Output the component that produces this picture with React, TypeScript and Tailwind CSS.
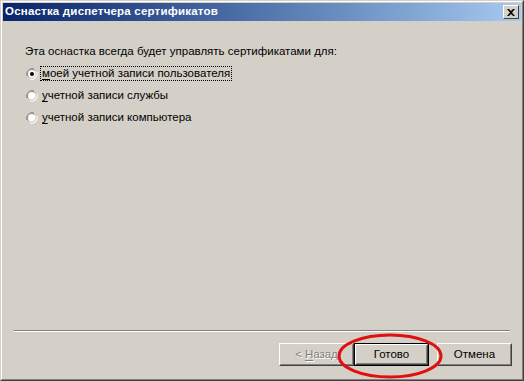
import React from "react";

const Radio = ({ checked }: { checked?: boolean }) => (
  <svg width="12" height="12" viewBox="0 0 12 12" className="shrink-0">
    <path d="M8 1 A5.5 5.5 0 0 0 1 8" fill="none" stroke="#808080" strokeWidth="1" />
    <path d="M8.5 2.5 A4.5 4.5 0 0 0 2.5 8.5" fill="none" stroke="#404040" strokeWidth="1" />
    <circle cx="6" cy="6" r="4" fill="#ffffff" />
    <path d="M4 11 A5.5 5.5 0 0 0 11 4" fill="none" stroke="#ffffff" strokeWidth="1" />
    <path d="M3.5 9.5 A4.5 4.5 0 0 0 9.5 3.5" fill="none" stroke="#d4d0c8" strokeWidth="1" />
    {checked && <circle cx="6" cy="6" r="2" fill="#000000" />}
  </svg>
);

const Button = ({ children, disabled, primary }: { children: React.ReactNode; disabled?: boolean; primary?: boolean }) => (
  <div className={`w-[75px] h-[23px] ${primary ? "border border-black" : ""}`}>
    <div className="h-full w-full border border-t-white border-l-white border-r-[#404040] border-b-[#404040] bg-[#d4d0c8]">
      <div className={`h-full w-full border border-t-[#d4d0c8] border-l-[#d4d0c8] border-r-[#808080] border-b-[#808080] flex items-center justify-center text-[11.5px] ${disabled ? "text-[#808080] [text-shadow:1px_1px_0_#ffffff]" : "text-black"}`}>
        {children}
      </div>
    </div>
  </div>
);

export default function App() {
  const options = [
    { k: "м", rest: "оей учетной записи пользователя", checked: true },
    { k: "у", rest: "четной записи службы" },
    { k: "у", rest: "четной записи компьютера" },
  ];

  return (
    <div className="w-[524px] h-[381px] bg-[#d4d0c8] font-['Liberation_Sans',Arial,sans-serif] relative overflow-hidden">
      <div className="h-full w-full border border-t-[#d4d0c8] border-l-[#d4d0c8] border-r-[#404040] border-b-[#404040]">
        <div className="h-full w-full border border-t-white border-l-white border-r-[#808080] border-b-[#808080] p-[1px] flex flex-col">
          {/* title bar */}
          <div className="h-[18px] bg-gradient-to-r from-[#0a246a] to-[#a6caf0] flex items-center pl-[2px] pr-[2px]">
            <span className="text-white font-bold text-[11.5px] tracking-[0.2px]">Оснастка диспетчера сертификатов</span>
            <div className="ml-auto w-[16px] h-[14px] bg-[#d4d0c8] border border-t-white border-l-white border-r-[#404040] border-b-[#404040] flex items-center justify-center">
              <svg width="8" height="7" viewBox="0 0 8 7">
                <path d="M0 0h2l2 2 2-2h2L5 3.5 8 7H6L4 5 2 7H0l3-3.5z" fill="#000" />
              </svg>
            </div>
          </div>

          {/* body */}
          <div className="flex-1 flex flex-col pl-[22px] pt-[23px] text-[11.5px] text-black">
            <div className="h-[14px] leading-[14px]">Эта оснастка всегда будет управлять сертификатами для:</div>
            <div className="flex flex-col gap-[9px] mt-[9px] pl-[1px]">
              {options.map((o, i) => (
                <div key={i} className="flex items-center gap-[3px] h-[13px]">
                  <Radio checked={o.checked} />
                  <span className={`leading-[13px] px-[1px] ${o.checked ? "outline outline-1 outline-dotted outline-black" : ""}`}>
                    <span className="underline underline-offset-2">{o.k}</span>
                    {o.rest}
                  </span>
                </div>
              ))}
            </div>
          </div>

          {/* separator */}
          <div className="mx-[11px] border-t border-t-[#808080] border-b border-b-white" />

          {/* buttons */}
          <div className="h-[46px] flex items-start justify-end pt-[11px] pr-[9px]">
            <Button disabled>
              &lt; <span className="underline underline-offset-2 ml-[3px]">Н</span>азад
            </Button>
            <Button primary>Готово</Button>
            <div className="w-[8px]" />
            <Button>Отмена</Button>
          </div>
        </div>
      </div>

      {/* red annotation ellipse */}
      <svg className="absolute left-[336px] top-[332px] pointer-events-none" width="108" height="48" viewBox="0 0 108 48">
        <ellipse cx="54" cy="24" rx="51" ry="21" fill="none" stroke="#e01010" strokeWidth="3" />
      </svg>
    </div>
  );
}
